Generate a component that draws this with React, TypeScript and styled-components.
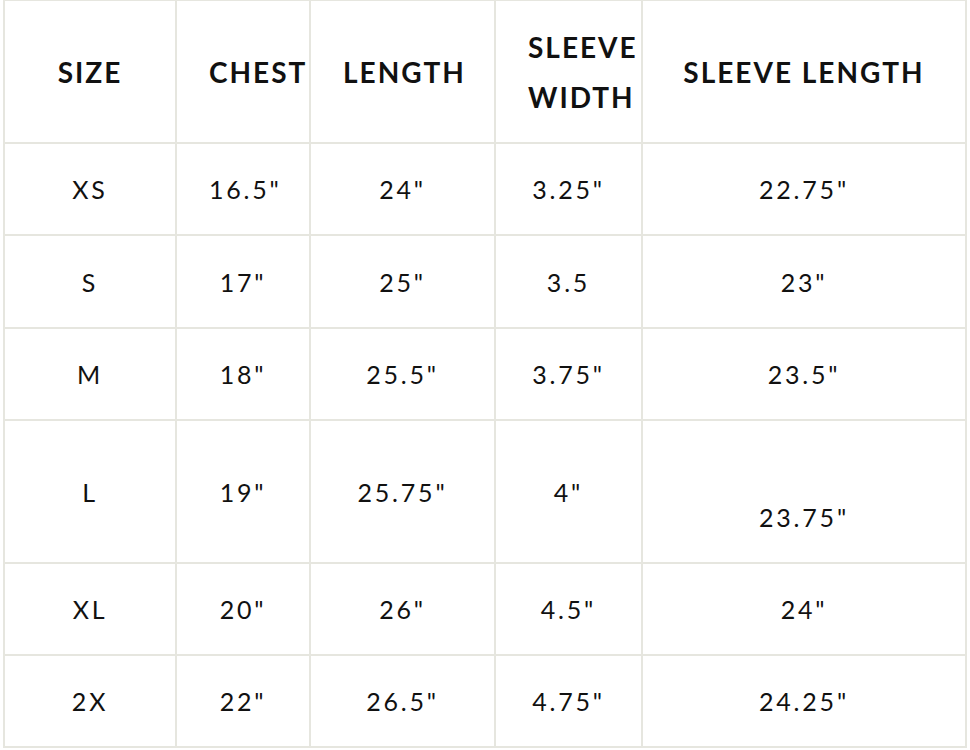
import styled, { createGlobalStyle } from 'styled-components';

const GlobalStyle = createGlobalStyle`
  html, body {
    margin: 0;
    padding: 0;
    background: #ffffff;
  }
  body {
    font-family: Lato, "Liberation Sans", sans-serif;
    color: #111111;
  }
`;

const headers = ['SIZE', 'CHEST', 'LENGTH', 'SLEEVE WIDTH', 'SLEEVE LENGTH'];

const rows = [
  ['XS', '16.5"', '24"', '3.25"', '22.75"'],
  ['S', '17"', '25"', '3.5', '23"'],
  ['M', '18"', '25.5"', '3.75"', '23.5"'],
  ['L', '19"', '25.75"', '4"', '\n23.75"'],
  ['XL', '20"', '26"', '4.5"', '24"'],
  ['2X', '22"', '26.5"', '4.75"', '24.25"'],
];

export default function App() {
  return (
    <>
      <GlobalStyle />
      <Page>
        <SizeChart>
          {headers.map((h) => (
            <Cell key={h}>
              <HeadText>{h}</HeadText>
            </Cell>
          ))}
          {rows.map((row) =>
            row.map((value, i) => (
              <Cell key={row[0] + i}>
                <BodyText>{value}</BodyText>
              </Cell>
            ))
          )}
        </SizeChart>
      </Page>
    </>
  );
}

const Page = styled.div`
  width: 100%;
  padding: 0 0 0 3px;
  margin-top: -1px;
`;

const SizeChart = styled.div`
  display: grid;
  width: 964px;
  box-sizing: border-box;
  grid-template-columns: 170px 132px 183px 145px 322px;
  grid-template-rows: 141px 90px 91px 90px 141px 90px 90px;
  gap: 2px;
  padding: 2px;
  background: #e6e6df;
`;

const Cell = styled.div`
  display: flex;
  align-items: center;
  min-width: 0;
  padding: 0 32px;
  background: #ffffff;
`;

const HeadText = styled.div`
  width: 100%;
  text-align: center;
  font-size: 28px;
  font-weight: 700;
  letter-spacing: 2px;
  line-height: 50px;
  white-space: normal;
`;

const BodyText = styled.div`
  width: 100%;
  text-align: center;
  font-size: 25px;
  font-weight: 400;
  letter-spacing: 2.8px;
  line-height: 50px;
  white-space: pre-line;
`;
